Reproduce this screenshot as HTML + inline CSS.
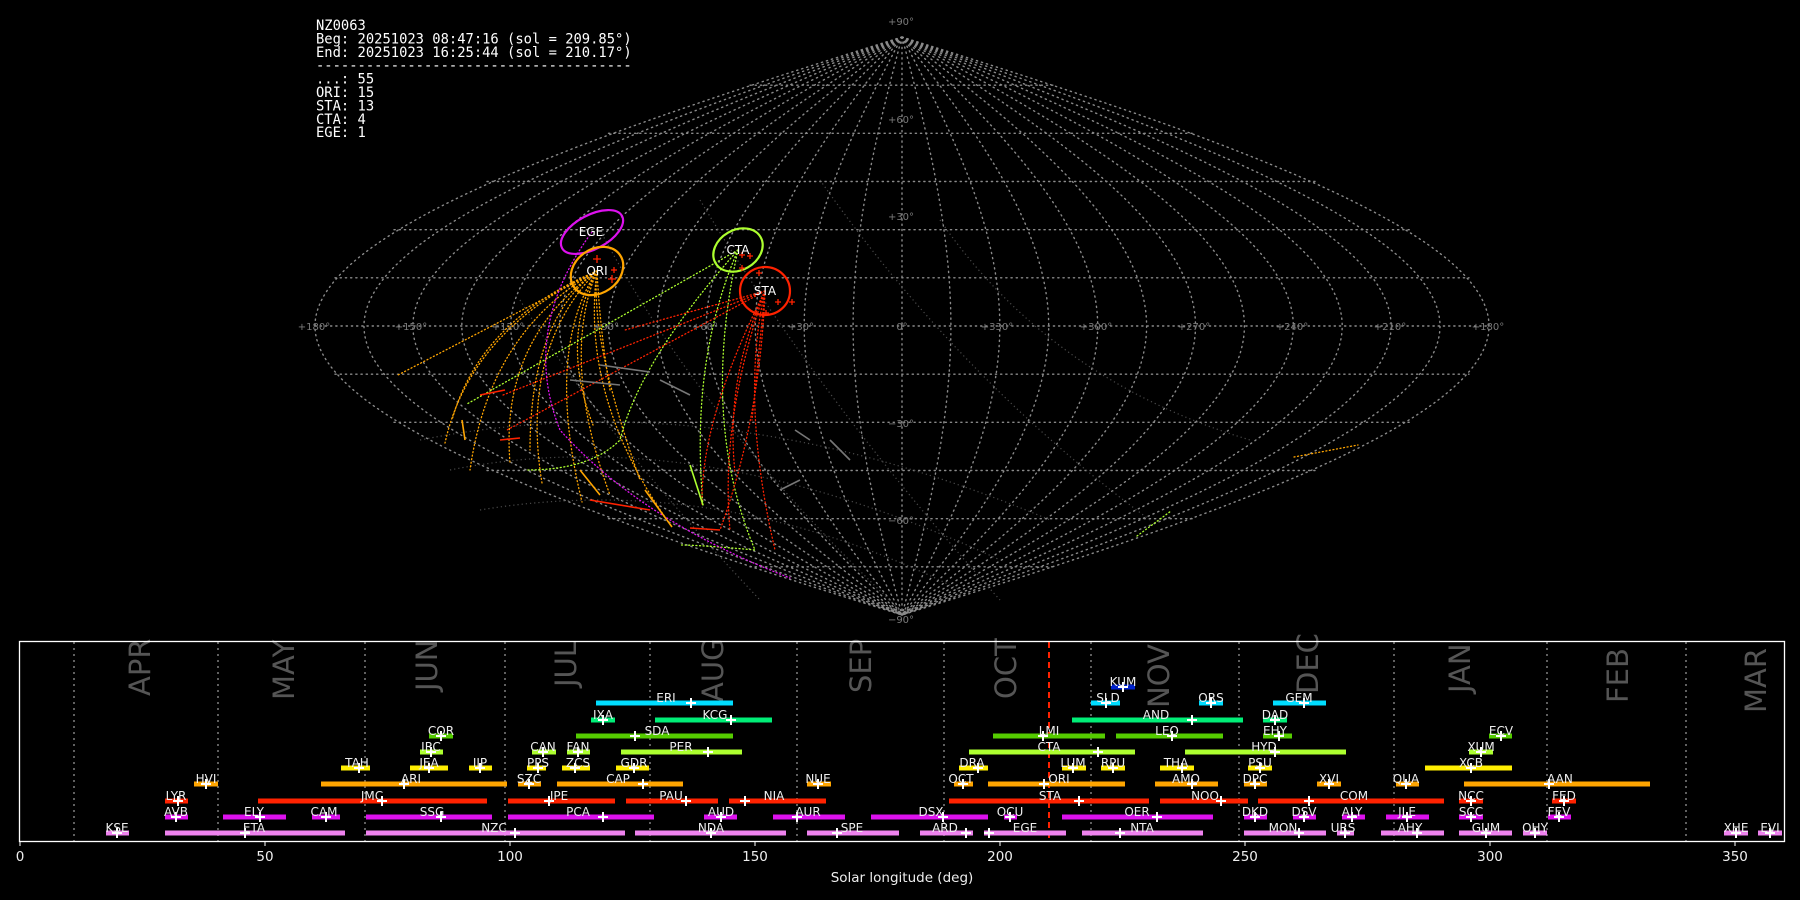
<!DOCTYPE html>
<html><head><meta charset="utf-8"><style>
html,body{margin:0;padding:0;background:#000;}
svg{display:block;}
.t{font-family:"DejaVu Sans","Liberation Sans",sans-serif;}
</style></head><body>
<svg width="1800" height="900" viewBox="0 0 1800 900" xmlns="http://www.w3.org/2000/svg">
<rect width="1800" height="900" fill="#000"/>

<g fill="#fff" font-family="'DejaVu Sans Mono','Liberation Mono',monospace" font-size="13.8">
<text x="316" y="30">NZ0063</text>
<text x="316" y="43.4">Beg: 20251023 08:47:16 (sol = 209.85°)</text>
<text x="316" y="56.8">End: 20251023 16:25:44 (sol = 210.17°)</text>
<text x="316" y="70.2">--------------------------------------</text>
<text x="316" y="83.6">...: 55</text>
<text x="316" y="97">ORI: 15</text>
<text x="316" y="110.4">STA: 13</text>
<text x="316" y="123.8">CTA: 4</text>
<text x="316" y="137.2">EGE: 1</text>
</g>

<g fill="none" stroke="#8a8a8a" stroke-width="1.4" stroke-dasharray="1.2 4" stroke-linecap="round">
<g transform="translate(902,326)">
<path d="M-587,0H587M-567,-48.2H567M-508,-96.3H508M-415,-144.5H415M-293.5,-192.7H293.5M-152,-240.8H152M-567,48.2H567M-508,96.3H508M-415,144.5H415M-293.5,192.7H293.5M-152,240.8H152M0,-289V289"/>
</g>
<path vector-effect="non-scaling-stroke" transform="translate(902,326) scale(48.9,1)" d="M0,-289C0.5236,-192.7 1,-96.3 1,0C1,96.3 0.5236,192.7 0,289"/>
<path vector-effect="non-scaling-stroke" transform="translate(902,326) scale(97.8,1)" d="M0,-289C0.5236,-192.7 1,-96.3 1,0C1,96.3 0.5236,192.7 0,289"/>
<path vector-effect="non-scaling-stroke" transform="translate(902,326) scale(146.7,1)" d="M0,-289C0.5236,-192.7 1,-96.3 1,0C1,96.3 0.5236,192.7 0,289"/>
<path vector-effect="non-scaling-stroke" transform="translate(902,326) scale(195.7,1)" d="M0,-289C0.5236,-192.7 1,-96.3 1,0C1,96.3 0.5236,192.7 0,289"/>
<path vector-effect="non-scaling-stroke" transform="translate(902,326) scale(244.6,1)" d="M0,-289C0.5236,-192.7 1,-96.3 1,0C1,96.3 0.5236,192.7 0,289"/>
<path vector-effect="non-scaling-stroke" transform="translate(902,326) scale(293.5,1)" d="M0,-289C0.5236,-192.7 1,-96.3 1,0C1,96.3 0.5236,192.7 0,289"/>
<path vector-effect="non-scaling-stroke" transform="translate(902,326) scale(342.4,1)" d="M0,-289C0.5236,-192.7 1,-96.3 1,0C1,96.3 0.5236,192.7 0,289"/>
<path vector-effect="non-scaling-stroke" transform="translate(902,326) scale(391.3,1)" d="M0,-289C0.5236,-192.7 1,-96.3 1,0C1,96.3 0.5236,192.7 0,289"/>
<path vector-effect="non-scaling-stroke" transform="translate(902,326) scale(440.2,1)" d="M0,-289C0.5236,-192.7 1,-96.3 1,0C1,96.3 0.5236,192.7 0,289"/>
<path vector-effect="non-scaling-stroke" transform="translate(902,326) scale(489.1,1)" d="M0,-289C0.5236,-192.7 1,-96.3 1,0C1,96.3 0.5236,192.7 0,289"/>
<path vector-effect="non-scaling-stroke" transform="translate(902,326) scale(538,1)" d="M0,-289C0.5236,-192.7 1,-96.3 1,0C1,96.3 0.5236,192.7 0,289"/>
<path vector-effect="non-scaling-stroke" transform="translate(902,326) scale(587,1)" d="M0,-289C0.5236,-192.7 1,-96.3 1,0C1,96.3 0.5236,192.7 0,289"/>
<path vector-effect="non-scaling-stroke" transform="translate(902,326) scale(-48.9,1)" d="M0,-289C0.5236,-192.7 1,-96.3 1,0C1,96.3 0.5236,192.7 0,289"/>
<path vector-effect="non-scaling-stroke" transform="translate(902,326) scale(-97.8,1)" d="M0,-289C0.5236,-192.7 1,-96.3 1,0C1,96.3 0.5236,192.7 0,289"/>
<path vector-effect="non-scaling-stroke" transform="translate(902,326) scale(-146.7,1)" d="M0,-289C0.5236,-192.7 1,-96.3 1,0C1,96.3 0.5236,192.7 0,289"/>
<path vector-effect="non-scaling-stroke" transform="translate(902,326) scale(-195.7,1)" d="M0,-289C0.5236,-192.7 1,-96.3 1,0C1,96.3 0.5236,192.7 0,289"/>
<path vector-effect="non-scaling-stroke" transform="translate(902,326) scale(-244.6,1)" d="M0,-289C0.5236,-192.7 1,-96.3 1,0C1,96.3 0.5236,192.7 0,289"/>
<path vector-effect="non-scaling-stroke" transform="translate(902,326) scale(-293.5,1)" d="M0,-289C0.5236,-192.7 1,-96.3 1,0C1,96.3 0.5236,192.7 0,289"/>
<path vector-effect="non-scaling-stroke" transform="translate(902,326) scale(-342.4,1)" d="M0,-289C0.5236,-192.7 1,-96.3 1,0C1,96.3 0.5236,192.7 0,289"/>
<path vector-effect="non-scaling-stroke" transform="translate(902,326) scale(-391.3,1)" d="M0,-289C0.5236,-192.7 1,-96.3 1,0C1,96.3 0.5236,192.7 0,289"/>
<path vector-effect="non-scaling-stroke" transform="translate(902,326) scale(-440.2,1)" d="M0,-289C0.5236,-192.7 1,-96.3 1,0C1,96.3 0.5236,192.7 0,289"/>
<path vector-effect="non-scaling-stroke" transform="translate(902,326) scale(-489.1,1)" d="M0,-289C0.5236,-192.7 1,-96.3 1,0C1,96.3 0.5236,192.7 0,289"/>
<path vector-effect="non-scaling-stroke" transform="translate(902,326) scale(-538,1)" d="M0,-289C0.5236,-192.7 1,-96.3 1,0C1,96.3 0.5236,192.7 0,289"/>
<path vector-effect="non-scaling-stroke" transform="translate(902,326) scale(-587,1)" d="M0,-289C0.5236,-192.7 1,-96.3 1,0C1,96.3 0.5236,192.7 0,289"/>
</g>
<g fill="none" stroke="#4a4a4a" stroke-width="1.2" stroke-dasharray="1.2 3">
<path d="M450,470 Q700,420 1000,560"/>
<path d="M420,440 Q720,380 1050,520"/>
<path d="M480,510 Q720,470 960,590"/>
<path d="M520,300 Q600,430 760,600"/>
<path d="M600,230 Q700,420 900,610"/>
<path d="M700,200 Q820,400 1000,600"/>
<path d="M820,180 Q960,380 1150,520"/>
<path d="M940,220 Q1050,380 1250,440"/>
</g>

<g class="t" fill="#7a7a7a" font-size="10" text-anchor="middle" dominant-baseline="middle">
<text x="901" y="22">+90°</text><text x="901" y="120">+60°</text><text x="901" y="217">+30°</text>
<text x="901" y="424">−30°</text><text x="901" y="521">−60°</text><text x="901" y="620">−90°</text>
<text x="314" y="327">+180°</text><text x="411" y="327">+150°</text><text x="508" y="327">+120°</text>
<text x="606" y="327">+90°</text><text x="705" y="327">+60°</text><text x="801" y="327">+30°</text>
<text x="902" y="327">0°</text><text x="997" y="327">+330°</text><text x="1096" y="327">+300°</text>
<text x="1194" y="327">+270°</text><text x="1292" y="327">+240°</text><text x="1390" y="327">+210°</text>
<text x="1488" y="327">+180°</text>
</g>

<g fill="none" stroke-width="1.3" stroke-dasharray="1 2.6" stroke-linecap="round">
<g stroke="#ffa500">
<path d="M597,271 L398,375"/>
<path d="M597,271 Q480,320 452,420"/>
<path d="M597,271 Q470,330 445,443"/>
<path d="M597,271 Q500,340 510,463"/>
<path d="M597,271 Q520,350 542,483"/>
<path d="M597,271 Q545,350 582,502"/>
<path d="M597,271 Q560,360 610,495"/>
<path d="M597,271 Q580,400 672,527"/>
<path d="M597,271 Q560,340 593,425"/>
<path d="M597,271 Q490,330 470,470"/>
<path d="M597,271 Q530,320 530,450"/>
<path d="M597,271 Q590,340 640,480"/>
<path d="M597,271 Q600,330 610,390"/>
<path d="M1294,457 L1358,445"/>
</g>
<g stroke="#adff2f">
<path d="M738,250 L467,404"/>
<path d="M738,250 Q640,360 620,440 Q590,470 527,470"/>
<path d="M738,250 Q690,360 703,505"/>
<path d="M738,250 Q700,420 755,550 Q700,545 680,545"/>
<path d="M1137,536 L1171,511"/>
</g>
<g stroke="#ff2200">
<path d="M765,291 L503,395"/>
<path d="M765,291 L507,430"/>
<path d="M765,291 Q700,420 702,506"/>
<path d="M765,291 Q720,420 730,530"/>
<path d="M765,291 Q740,400 775,550"/>
<path d="M765,291 L752,420"/>
<path d="M765,291 Q725,380 735,472"/>
<path d="M765,291 Q760,420 720,530"/>
<path d="M765,291 L625,330"/>
</g>
<path stroke="#dd11ee" d="M592,232 Q520,330 560,430 Q640,520 790,578"/>
</g>
<g fill="none" stroke-width="1.6">
<path stroke="#ff2200" d="M480,395 L505,390 M590,500 L650,510 M690,528 L720,530 M500,440 L520,438"/>
<path stroke="#ffa500" d="M580,470 L600,495 M645,490 L672,527 M462,420 L465,440"/>
<path stroke="#adff2f" d="M690,465 L703,505"/>
<path stroke="#777" d="M570,380 L620,385 M600,365 L650,372 M660,380 L690,395 M780,490 L800,480 M795,430 L810,440 M830,440 L850,460"/>
</g>

<g fill="none" stroke-width="2.2">
<ellipse cx="592" cy="232" rx="34" ry="17" transform="rotate(-28 592 232)" stroke="#dd11ee"/>
<ellipse cx="597" cy="271" rx="28" ry="22" transform="rotate(-35 597 271)" stroke="#ffa500"/>
<ellipse cx="738" cy="250" rx="26" ry="20" transform="rotate(-30 738 250)" stroke="#adff2f"/>
<ellipse cx="765" cy="291" rx="25" ry="24" stroke="#ff2200"/>
</g>
<g stroke="#ff2200" stroke-width="1.3">
<path d="M593,259h8M597,255v8M608,279h8M612,275v8M611,270h6M614,267v6M739,255h6M742,252v6M747,256h6M750,253v6M739,268h6M742,265v6M756,273h6M759,270v6M775,302h6M778,299v6M789,302h6M792,299v6M763,313h6M766,310v6"/>
</g>
<g class="t" fill="#fff" font-size="12" text-anchor="middle">
<text x="591" y="236">EGE</text><text x="597" y="275">ORI</text><text x="738" y="254">CTA</text><text x="765" y="295">STA</text>
</g>

<g stroke="#777" stroke-width="1.6" stroke-dasharray="2 4">
<path d="M74,642V841M218,642V841M365,642V841M505,642V841M650,642V841M797,642V841M944,642V841M1091,642V841M1239,642V841M1394,642V841M1547,642V841M1686,642V841"/>
</g>
<g class="t" fill="#555" font-size="29">
<text transform="translate(150,696) rotate(-90)">APR</text>
<text transform="translate(294,700) rotate(-90)">MAY</text>
<text transform="translate(437,691) rotate(-90)">JUN</text>
<text transform="translate(576,687) rotate(-90)">JUL</text>
<text transform="translate(723,702) rotate(-90)">AUG</text>
<text transform="translate(871,693) rotate(-90)">SEP</text>
<text transform="translate(1016,699) rotate(-90)">OCT</text>
<text transform="translate(1169,708) rotate(-90)">NOV</text>
<text transform="translate(1318,694) rotate(-90)">DEC</text>
<text transform="translate(1470,693) rotate(-90)">JAN</text>
<text transform="translate(1628,703) rotate(-90)">FEB</text>
<text transform="translate(1766,713) rotate(-90)">MAR</text>
</g>
<path d="M1049,642V841" stroke="#ff2200" stroke-width="2" stroke-dasharray="6 4"/>

<g fill="#ee82ee"><rect x="106" y="830.5" width="23" height="5"/><rect x="165" y="830.5" width="180" height="5"/><rect x="366" y="830.5" width="259" height="5"/><rect x="635" y="830.5" width="151" height="5"/><rect x="807" y="830.5" width="92" height="5"/><rect x="920" y="830.5" width="53" height="5"/><rect x="984" y="830.5" width="82" height="5"/><rect x="1082" y="830.5" width="121" height="5"/><rect x="1244" y="830.5" width="82" height="5"/><rect x="1337" y="830.5" width="17" height="5"/><rect x="1381" y="830.5" width="63" height="5"/><rect x="1459" y="830.5" width="53" height="5"/><rect x="1523" y="830.5" width="24" height="5"/><rect x="1724" y="830.5" width="24" height="5"/><rect x="1758" y="830.5" width="24" height="5"/></g>
<g fill="#dd11ee"><rect x="165" y="814.5" width="23" height="5"/><rect x="223" y="814.5" width="63" height="5"/><rect x="312" y="814.5" width="28" height="5"/><rect x="366" y="814.5" width="126" height="5"/><rect x="508" y="814.5" width="146" height="5"/><rect x="704" y="814.5" width="33" height="5"/><rect x="773" y="814.5" width="72" height="5"/><rect x="871" y="814.5" width="117" height="5"/><rect x="1004" y="814.5" width="13" height="5"/><rect x="1062" y="814.5" width="151" height="5"/><rect x="1244" y="814.5" width="23" height="5"/><rect x="1293" y="814.5" width="23" height="5"/><rect x="1342" y="814.5" width="23" height="5"/><rect x="1386" y="814.5" width="43" height="5"/><rect x="1459" y="814.5" width="24" height="5"/><rect x="1548" y="814.5" width="23" height="5"/></g>
<g fill="#ff2200"><rect x="165" y="798.5" width="23" height="5"/><rect x="258" y="798.5" width="229" height="5"/><rect x="508" y="798.5" width="107" height="5"/><rect x="626" y="798.5" width="92" height="5"/><rect x="729" y="798.5" width="97" height="5"/><rect x="949" y="798.5" width="200" height="5"/><rect x="1160" y="798.5" width="88" height="5"/><rect x="1258" y="798.5" width="186" height="5"/><rect x="1459" y="798.5" width="24" height="5"/><rect x="1552" y="798.5" width="24" height="5"/></g>
<g fill="#ffa500"><rect x="194" y="781.5" width="24" height="5"/><rect x="321" y="781.5" width="186" height="5"/><rect x="518" y="781.5" width="23" height="5"/><rect x="557" y="781.5" width="126" height="5"/><rect x="807" y="781.5" width="24" height="5"/><rect x="954" y="781.5" width="19" height="5"/><rect x="988" y="781.5" width="137" height="5"/><rect x="1155" y="781.5" width="63" height="5"/><rect x="1244" y="781.5" width="23" height="5"/><rect x="1317" y="781.5" width="24" height="5"/><rect x="1396" y="781.5" width="23" height="5"/><rect x="1464" y="781.5" width="186" height="5"/></g>
<g fill="#ffee00"><rect x="341" y="765.5" width="29" height="5"/><rect x="410" y="765.5" width="38" height="5"/><rect x="469" y="765.5" width="23" height="5"/><rect x="527" y="765.5" width="19" height="5"/><rect x="562" y="765.5" width="28" height="5"/><rect x="616" y="765.5" width="33" height="5"/><rect x="959" y="765.5" width="29" height="5"/><rect x="1062" y="765.5" width="24" height="5"/><rect x="1101" y="765.5" width="24" height="5"/><rect x="1160" y="765.5" width="34" height="5"/><rect x="1248" y="765.5" width="24" height="5"/><rect x="1425" y="765.5" width="87" height="5"/></g>
<g fill="#adff2f"><rect x="420" y="749.5" width="23" height="5"/><rect x="532" y="749.5" width="24" height="5"/><rect x="567" y="749.5" width="23" height="5"/><rect x="621" y="749.5" width="121" height="5"/><rect x="969" y="749.5" width="166" height="5"/><rect x="1185" y="749.5" width="161" height="5"/><rect x="1469" y="749.5" width="24" height="5"/></g>
<g fill="#55cc00"><rect x="429" y="733.5" width="24" height="5"/><rect x="576" y="733.5" width="157" height="5"/><rect x="993" y="733.5" width="112" height="5"/><rect x="1116" y="733.5" width="107" height="5"/><rect x="1263" y="733.5" width="29" height="5"/><rect x="1489" y="733.5" width="23" height="5"/></g>
<g fill="#00ee77"><rect x="591" y="717.5" width="24" height="5"/><rect x="655" y="717.5" width="117" height="5"/><rect x="1072" y="717.5" width="171" height="5"/><rect x="1263" y="717.5" width="24" height="5"/></g>
<g fill="#00ddff"><rect x="596" y="700.5" width="137" height="5"/><rect x="1091" y="700.5" width="29" height="5"/><rect x="1199" y="700.5" width="24" height="5"/><rect x="1273" y="700.5" width="53" height="5"/></g>
<g fill="#0022cc"><rect x="1111" y="684.5" width="24" height="5"/></g>

<path stroke="#fff" stroke-width="2" fill="none" d="
M112,833h10M117,828v10M240,833h10M245,828v10M510,833h10M515,828v10M706,833h10M711,828v10M832,833h10M837,828v10M961,833h10M966,828v10M984,833h10M989,828v10M1115,833h10M1120,828v10M1294,833h10M1299,828v10M1340,833h10M1345,828v10M1412,833h10M1417,828v10M1481,833h10M1486,828v10M1530,833h10M1535,828v10M1731,833h10M1736,828v10M1765,833h10M1770,828v10
M171,817h10M176,812v10M255,817h10M260,812v10M321,817h10M326,812v10M436,817h10M441,812v10M598,817h10M603,812v10M716,817h10M721,812v10M792,817h10M797,812v10M938,817h10M943,812v10M1005,817h10M1010,812v10M1152,817h10M1157,812v10M1250,817h10M1255,812v10M1299,817h10M1304,812v10M1347,817h10M1352,812v10M1402,817h10M1407,812v10M1466,817h10M1471,812v10M1554,817h10M1559,812v10
M173,801h10M178,796v10M377,801h10M382,796v10M544,801h10M549,796v10M681,801h10M686,796v10M740,801h10M745,796v10M1074,801h10M1079,796v10M1216,801h10M1221,796v10M1304,801h10M1309,796v10M1466,801h10M1471,796v10M1559,801h10M1564,796v10
M201,784h10M206,779v10M399,784h10M404,779v10M524,784h10M529,779v10M638,784h10M643,779v10M813,784h10M818,779v10M958,784h10M963,779v10M1039,784h10M1044,779v10M1187,784h10M1192,779v10M1250,784h10M1255,779v10M1324,784h10M1329,779v10M1401,784h10M1406,779v10M1544,784h10M1549,779v10
M354,768h10M359,763v10M424,768h10M429,763v10M475,768h10M480,763v10M533,768h10M538,763v10M570,768h10M575,763v10M629,768h10M634,763v10M973,768h10M978,763v10M1068,768h10M1073,763v10M1108,768h10M1113,763v10M1177,768h10M1182,763v10M1255,768h10M1260,763v10M1466,768h10M1471,763v10
M426,752h10M431,747v10M538,752h10M543,747v10M573,752h10M578,747v10M703,752h10M708,747v10M1093,752h10M1098,747v10M1270,752h10M1275,747v10M1476,752h10M1481,747v10
M436,736h10M441,731v10M630,736h10M635,731v10M1038,736h10M1043,731v10M1167,736h10M1172,731v10M1274,736h10M1279,731v10M1496,736h10M1501,731v10
M598,720h10M603,715v10M726,720h10M731,715v10M1187,720h10M1192,715v10M1270,720h10M1275,715v10
M686,703h10M691,698v10M1101,703h10M1106,698v10M1206,703h10M1211,698v10M1299,703h10M1304,698v10
M1118,687h10M1123,682v10"/>

<g class="t" fill="#eee" font-size="12" text-anchor="middle">
<text x="117" y="832">KSE</text><text x="254" y="832">ETA</text><text x="494" y="832">NZC</text><text x="711" y="832">NDA</text><text x="852" y="832">SPE</text><text x="945" y="832">ARD</text><text x="1025" y="832">EGE</text><text x="1142" y="832">NTA</text><text x="1283" y="832">MON</text><text x="1343" y="832">URS</text><text x="1410" y="832">AHY</text><text x="1486" y="832">GUM</text><text x="1535" y="832">OHY</text><text x="1736" y="832">XHE</text><text x="1770" y="832">EVI</text>
<text x="176" y="816">AVB</text><text x="254" y="816">ELY</text><text x="324" y="816">CAM</text><text x="432" y="816">SSG</text><text x="578" y="816">PCA</text><text x="721" y="816">AUD</text><text x="808" y="816">AUR</text><text x="931" y="816">DSX</text><text x="1010" y="816">OCU</text><text x="1137" y="816">OER</text><text x="1255" y="816">DKD</text><text x="1304" y="816">DSV</text><text x="1352" y="816">ALY</text><text x="1407" y="816">JLE</text><text x="1471" y="816">SCC</text><text x="1559" y="816">FEV</text>
<text x="176" y="800">LYR</text><text x="372" y="800">JMC</text><text x="559" y="800">JPE</text><text x="671" y="800">PAU</text><text x="774" y="800">NIA</text><text x="1050" y="800">STA</text><text x="1205" y="800">NOO</text><text x="1354" y="800">COM</text><text x="1471" y="800">NCC</text><text x="1564" y="800">FED</text>
<text x="206" y="783">HVI</text><text x="411" y="783">ARI</text><text x="529" y="783">SZC</text><text x="618" y="783">CAP</text><text x="818" y="783">NUE</text><text x="961" y="783">OCT</text><text x="1059" y="783">ORI</text><text x="1186" y="783">AMO</text><text x="1255" y="783">DPC</text><text x="1329" y="783">XVI</text><text x="1406" y="783">QUA</text><text x="1560" y="783">AAN</text>
<text x="357" y="767">TAH</text><text x="429" y="767">JEA</text><text x="480" y="767">IIP</text><text x="538" y="767">PPS</text><text x="578" y="767">ZCS</text><text x="634" y="767">GDR</text><text x="972" y="767">DRA</text><text x="1073" y="767">LUM</text><text x="1113" y="767">RPU</text><text x="1176" y="767">THA</text><text x="1260" y="767">PSU</text><text x="1471" y="767">XCB</text>
<text x="431" y="751">IRC</text><text x="543" y="751">CAN</text><text x="578" y="751">FAN</text><text x="681" y="751">PER</text><text x="1049" y="751">CTA</text><text x="1264" y="751">HYD</text><text x="1481" y="751">XUM</text>
<text x="441" y="735">COR</text><text x="657" y="735">SDA</text><text x="1049" y="735">LMI</text><text x="1167" y="735">LEO</text><text x="1275" y="735">EHY</text><text x="1501" y="735">ECV</text>
<text x="603" y="719">IXA</text><text x="715" y="719">KCG</text><text x="1156" y="719">AND</text><text x="1275" y="719">DAD</text>
<text x="666" y="702">ERI</text><text x="1108" y="702">SLD</text><text x="1211" y="702">ORS</text><text x="1299" y="702">GEM</text>
<text x="1123" y="686">KUM</text>
</g>

<rect x="19.5" y="641.5" width="1765" height="200" fill="none" stroke="#fff" stroke-width="1.3"/>
<path stroke="#fff" stroke-width="1" d="M20,842v4M265,842v4M510,842v4M755,842v4M1000,842v4M1245,842v4M1490,842v4M1735,842v4"/>
<g class="t" fill="#eee" font-size="13.5" text-anchor="middle">
<text x="20" y="861">0</text><text x="265" y="861">50</text><text x="510" y="861">100</text><text x="755" y="861">150</text><text x="1000" y="861">200</text><text x="1245" y="861">250</text><text x="1490" y="861">300</text><text x="1735" y="861">350</text>
<text x="902" y="882">Solar longitude (deg)</text>
</g>
</svg>
</body></html>
